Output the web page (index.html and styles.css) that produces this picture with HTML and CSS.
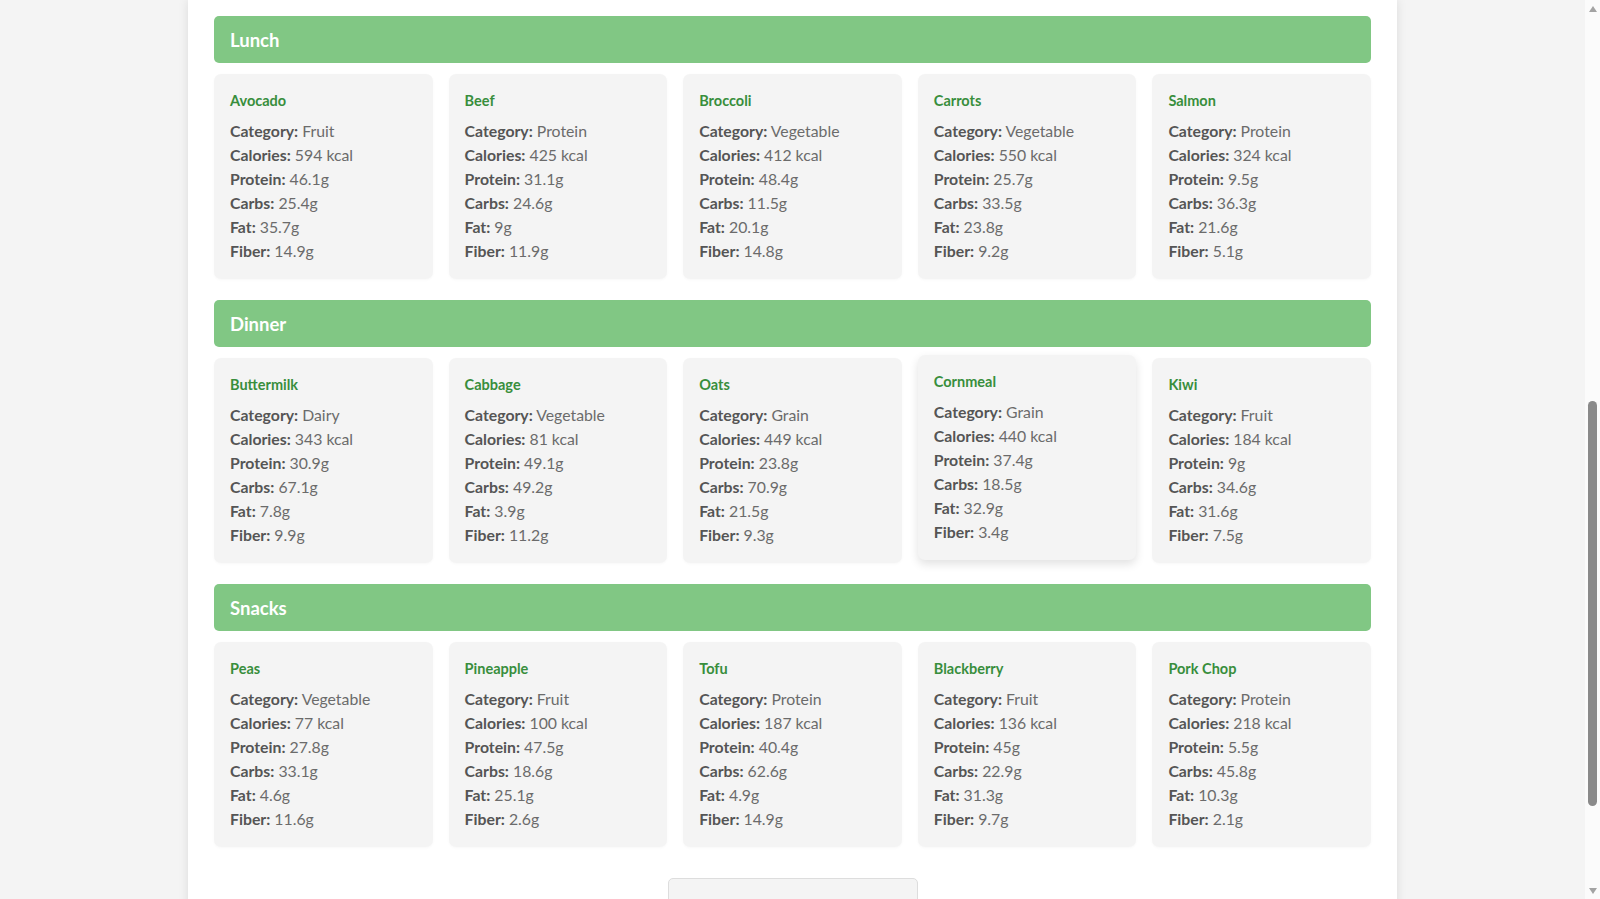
FILE: index.html
```html
<!DOCTYPE html>
<html lang="en">
<head>
<meta charset="utf-8">
<title>Meal Plan</title>
<link rel="stylesheet" href="styles.css">
</head>
<body>
<div class="viewport">
  <main class="page">
    <div class="container">
      <section class="meal-section">
        <h2 class="meal-header">Lunch</h2>
        <div class="food-grid">
          <div class="food-card"><h3>Avocado</h3><p><b>Category:</b> Fruit</p><p><b>Calories:</b> 594 kcal</p><p><b>Protein:</b> 46.1g</p><p><b>Carbs:</b> 25.4g</p><p><b>Fat:</b> 35.7g</p><p><b>Fiber:</b> 14.9g</p></div>
          <div class="food-card"><h3>Beef</h3><p><b>Category:</b> Protein</p><p><b>Calories:</b> 425 kcal</p><p><b>Protein:</b> 31.1g</p><p><b>Carbs:</b> 24.6g</p><p><b>Fat:</b> 9g</p><p><b>Fiber:</b> 11.9g</p></div>
          <div class="food-card"><h3>Broccoli</h3><p><b>Category:</b> Vegetable</p><p><b>Calories:</b> 412 kcal</p><p><b>Protein:</b> 48.4g</p><p><b>Carbs:</b> 11.5g</p><p><b>Fat:</b> 20.1g</p><p><b>Fiber:</b> 14.8g</p></div>
          <div class="food-card"><h3>Carrots</h3><p><b>Category:</b> Vegetable</p><p><b>Calories:</b> 550 kcal</p><p><b>Protein:</b> 25.7g</p><p><b>Carbs:</b> 33.5g</p><p><b>Fat:</b> 23.8g</p><p><b>Fiber:</b> 9.2g</p></div>
          <div class="food-card"><h3>Salmon</h3><p><b>Category:</b> Protein</p><p><b>Calories:</b> 324 kcal</p><p><b>Protein:</b> 9.5g</p><p><b>Carbs:</b> 36.3g</p><p><b>Fat:</b> 21.6g</p><p><b>Fiber:</b> 5.1g</p></div>
        </div>
      </section>
      <section class="meal-section">
        <h2 class="meal-header">Dinner</h2>
        <div class="food-grid">
          <div class="food-card"><h3>Buttermilk</h3><p><b>Category:</b> Dairy</p><p><b>Calories:</b> 343 kcal</p><p><b>Protein:</b> 30.9g</p><p><b>Carbs:</b> 67.1g</p><p><b>Fat:</b> 7.8g</p><p><b>Fiber:</b> 9.9g</p></div>
          <div class="food-card"><h3>Cabbage</h3><p><b>Category:</b> Vegetable</p><p><b>Calories:</b> 81 kcal</p><p><b>Protein:</b> 49.1g</p><p><b>Carbs:</b> 49.2g</p><p><b>Fat:</b> 3.9g</p><p><b>Fiber:</b> 11.2g</p></div>
          <div class="food-card"><h3>Oats</h3><p><b>Category:</b> Grain</p><p><b>Calories:</b> 449 kcal</p><p><b>Protein:</b> 23.8g</p><p><b>Carbs:</b> 70.9g</p><p><b>Fat:</b> 21.5g</p><p><b>Fiber:</b> 9.3g</p></div>
          <div class="food-card is-hovered"><h3>Cornmeal</h3><p><b>Category:</b> Grain</p><p><b>Calories:</b> 440 kcal</p><p><b>Protein:</b> 37.4g</p><p><b>Carbs:</b> 18.5g</p><p><b>Fat:</b> 32.9g</p><p><b>Fiber:</b> 3.4g</p></div>
          <div class="food-card"><h3>Kiwi</h3><p><b>Category:</b> Fruit</p><p><b>Calories:</b> 184 kcal</p><p><b>Protein:</b> 9g</p><p><b>Carbs:</b> 34.6g</p><p><b>Fat:</b> 31.6g</p><p><b>Fiber:</b> 7.5g</p></div>
        </div>
      </section>
      <section class="meal-section">
        <h2 class="meal-header">Snacks</h2>
        <div class="food-grid">
          <div class="food-card"><h3>Peas</h3><p><b>Category:</b> Vegetable</p><p><b>Calories:</b> 77 kcal</p><p><b>Protein:</b> 27.8g</p><p><b>Carbs:</b> 33.1g</p><p><b>Fat:</b> 4.6g</p><p><b>Fiber:</b> 11.6g</p></div>
          <div class="food-card"><h3>Pineapple</h3><p><b>Category:</b> Fruit</p><p><b>Calories:</b> 100 kcal</p><p><b>Protein:</b> 47.5g</p><p><b>Carbs:</b> 18.6g</p><p><b>Fat:</b> 25.1g</p><p><b>Fiber:</b> 2.6g</p></div>
          <div class="food-card"><h3>Tofu</h3><p><b>Category:</b> Protein</p><p><b>Calories:</b> 187 kcal</p><p><b>Protein:</b> 40.4g</p><p><b>Carbs:</b> 62.6g</p><p><b>Fat:</b> 4.9g</p><p><b>Fiber:</b> 14.9g</p></div>
          <div class="food-card"><h3>Blackberry</h3><p><b>Category:</b> Fruit</p><p><b>Calories:</b> 136 kcal</p><p><b>Protein:</b> 45g</p><p><b>Carbs:</b> 22.9g</p><p><b>Fat:</b> 31.3g</p><p><b>Fiber:</b> 9.7g</p></div>
          <div class="food-card"><h3>Pork Chop</h3><p><b>Category:</b> Protein</p><p><b>Calories:</b> 218 kcal</p><p><b>Protein:</b> 5.5g</p><p><b>Carbs:</b> 45.8g</p><p><b>Fat:</b> 10.3g</p><p><b>Fiber:</b> 2.1g</p></div>
        </div>
      </section>
      <div class="actions">
        <button class="action-btn" type="button">Generate New Meal Plan</button>
      </div>
    </div>
  </main>
  <aside class="scrollbar" aria-hidden="true">
    <span class="arrow arrow-up"></span>
    <div class="track"><div class="thumb"></div></div>
    <span class="arrow arrow-down"></span>
  </aside>
</div>
</body>
</html>
```
FILE: styles.css
```css
* { box-sizing: border-box; }
html, body { margin: 0; padding: 0; }
body {
  font-family: Lato, "Open Sans", "Liberation Sans", sans-serif;
  color: #666;
  background: #f4f4f4;
  height: 899px;
  overflow: hidden;
}
.viewport {
  display: flex;
  height: 899px;
}
.page {
  flex: 1;
  background: #f4f4f4;
  overflow: hidden;
}
.container {
  width: 1209px;
  margin: 0 auto;
  min-height: 899px;
  background: #fff;
  box-shadow: 0 0 10px rgba(0,0,0,0.1);
  padding: 16px 26px 0;
}
.meal-section { margin-bottom: 21px; }
.meal-header {
  margin: 0 0 11px;
  height: 47px;
  display: flex;
  align-items: center;
  padding: 0 16px;
  background: #81c784;
  color: #fff;
  border-radius: 5px;
  font-size: 18.5px;
  font-weight: 700;
}
.food-grid {
  display: grid;
  grid-template-columns: repeat(5, 1fr);
  gap: 16px;
}
.food-card {
  background: #f4f4f4;
  border-radius: 7px;
  padding: 17px 16px 16px;
  box-shadow: 0 1px 3px rgba(0,0,0,0.03);
}
.food-card.is-hovered {
  transform: translateY(-3px);
  box-shadow: 0 4px 10px rgba(0,0,0,0.12);
}
.food-card h3 {
  margin: 0 0 8px;
  font-size: 14.5px;
  line-height: 20px;
  color: #388e3c;
  font-weight: 700;
}
.food-card p {
  margin: 0;
  font-size: 15.8px;
  line-height: 24px;
  color: #6b6b6b;
}
.food-card b { color: #555; font-weight: 700; }
.actions {
  display: flex;
  justify-content: center;
  padding-top: 10px;
}
.action-btn {
  width: 250px;
  background: #f4f4f4;
  border: 1px solid #ddd;
  border-radius: 5px;
  padding: 15px 10px 13px;
  font-family: inherit;
  font-size: 16px;
  line-height: 20px;
  color: #333;
}
.scrollbar {
  width: 15px;
  background: #fbfbfb;
  display: flex;
  flex-direction: column;
  align-items: center;
  padding: 6px 0 5px;
}
.arrow {
  width: 0; height: 0;
  border-left: 4.5px solid transparent;
  border-right: 4.5px solid transparent;
}
.arrow-up { border-bottom: 6px solid #a3a3a3; }
.arrow-down { border-top: 6px solid #a3a3a3; }
.track {
  flex: 1;
  width: 100%;
  display: flex;
  justify-content: center;
  padding-top: 389px;
}
.thumb {
  width: 9px;
  height: 405px;
  background: #8a8a8a;
  border-radius: 5px;
}
```
